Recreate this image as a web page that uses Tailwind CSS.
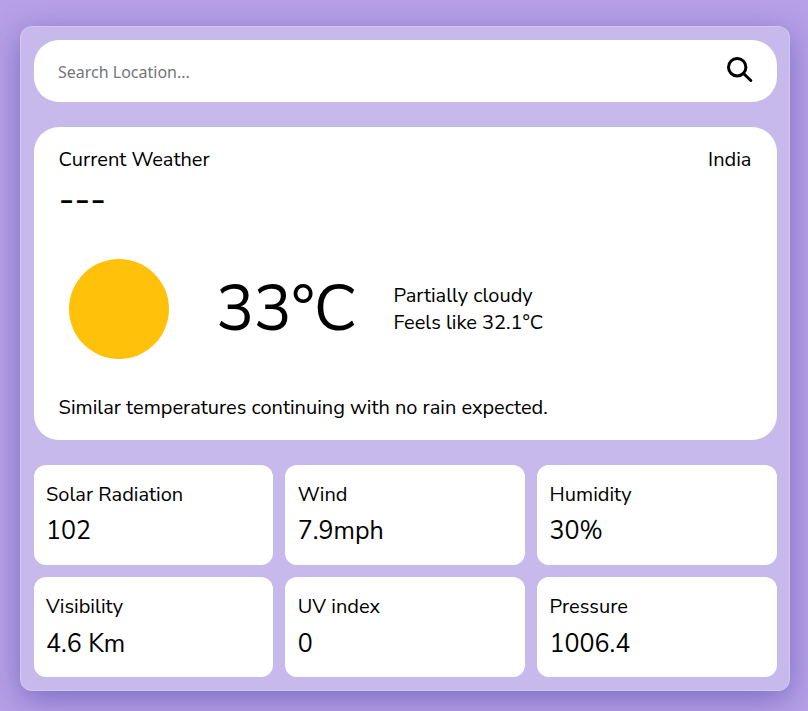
<!DOCTYPE html>
<html lang="en">
<head>
<meta charset="utf-8">
<title>Weather</title>
<script src="https://cdn.jsdelivr.net/npm/@tailwindcss/browser@4"></script>
</head>
<body class="h-[711px] overflow-hidden bg-[#b8a0e8] pl-5 pt-[26px] font-['Nunito_Sans',Nunito,Lato,sans-serif] text-[20px] leading-[27px] text-black">
<main class="h-[665px] w-[770px] rounded-xl border border-white/20 bg-[#c7b9eb] py-[13px] pl-[13px] pr-3 shadow-[0_8px_32px_rgba(31,38,135,0.42)]">
  <form class="flex h-[62px] items-center justify-between rounded-[25px] bg-white pl-6 pr-6">
    <input class="w-[500px] pt-0.5 font-[Tahoma,'Noto_Sans',sans-serif] text-[16px] outline-none placeholder:text-[#757575]" placeholder="Search Location...">
    <svg class="mb-[2px] size-[26px]" viewBox="0 0 26 26" fill="none" stroke="#000" stroke-width="3" stroke-linecap="round"><circle cx="10.2" cy="10.2" r="8.7"/><path d="M17 17l6.8 6.5"/></svg>
  </form>
  <section class="mt-[25px] flex h-[313px] flex-col rounded-[25px] bg-white pl-[24.6px] pr-[25.6px] pt-[19px]">
    <div class="flex justify-between"><h2>Current Weather</h2><span>India</span></div>
    <div class="mt-[9px] h-9 text-[38px] font-medium leading-9 tracking-[-0.5px]">---</div>
    <div class="mt-[41px] flex h-[100px] items-center pl-[10.4px]">
      <div class="size-[100px] shrink-0 rounded-full bg-[#ffc10a]"></div>
      <div class="ml-[47px] w-[177.5px] text-[64px] leading-[80px] tracking-[-0.8px]">33°C</div>
      <div><p>Partially cloudy</p><p>Feels like 32.1°C</p></div>
    </div>
    <p class="mt-[35px]">Similar temperatures continuing with no rain expected.</p>
  </section>
  <section class="mt-[25px] grid grid-cols-[239px_240px_240px] gap-3">
    <article class="h-[100px] rounded-xl bg-white px-3 pt-4"><h3>Solar Radiation</h3><p class="mt-1.5 text-[25px] leading-[34px]">102</p></article>
    <article class="h-[100px] rounded-xl bg-white px-[12.8px] pt-4"><h3>Wind</h3><p class="mt-1.5 text-[25px] leading-[34px]">7.9mph</p></article>
    <article class="h-[100px] rounded-xl bg-white px-[12.6px] pt-4"><h3>Humidity</h3><p class="mt-1.5 text-[25px] leading-[34px]">30%</p></article>
    <article class="h-[100px] rounded-xl bg-white px-3 pt-4"><h3>Visibility</h3><p class="mt-[7px] text-[25px] leading-[34px]">4.6 Km</p></article>
    <article class="h-[100px] rounded-xl bg-white px-[12.8px] pt-4"><h3>UV index</h3><p class="mt-[7px] text-[25px] leading-[34px]">0</p></article>
    <article class="h-[100px] rounded-xl bg-white px-[12.6px] pt-4"><h3>Pressure</h3><p class="mt-[7px] text-[25px] leading-[34px]">1006.4</p></article>
  </section>
</main>
</body>
</html>
